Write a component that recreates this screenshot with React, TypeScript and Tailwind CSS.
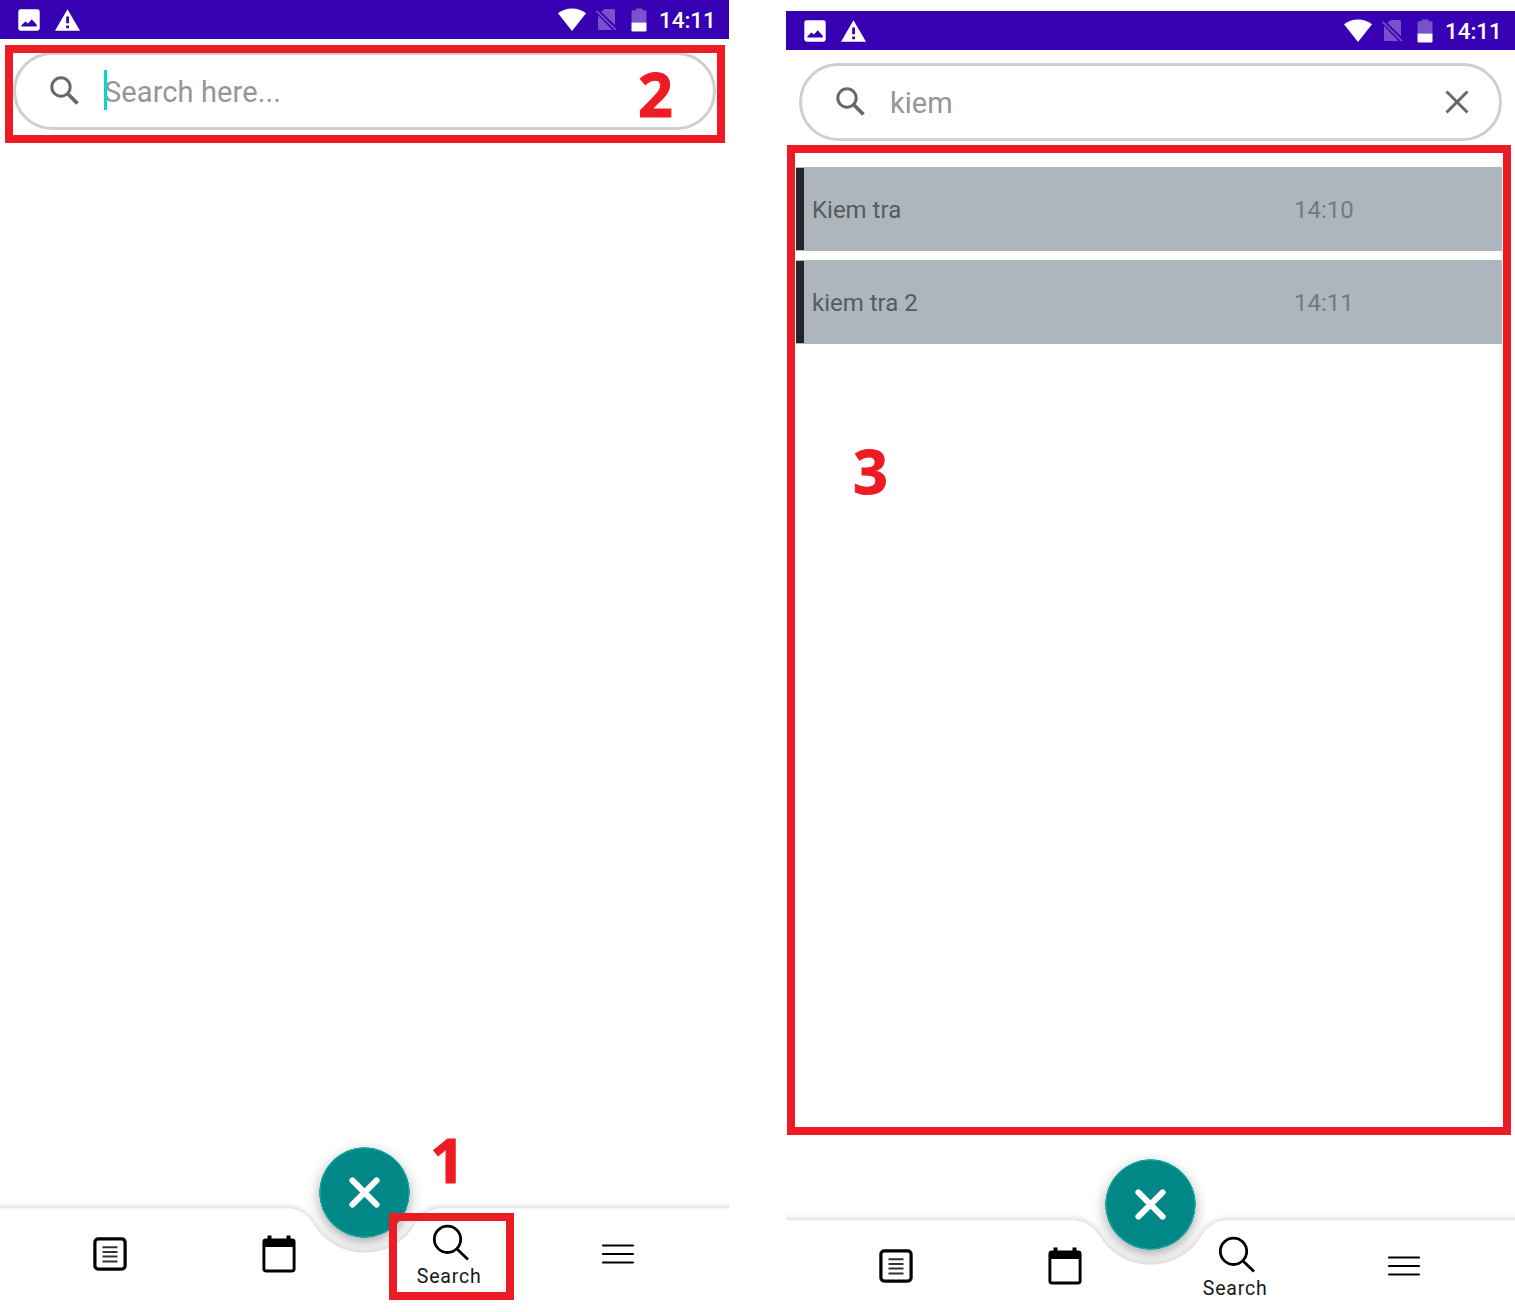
import type { ReactNode } from 'react';

function StatusBar() {
  return (
    <header className="flex h-[39px] shrink-0 items-center justify-between bg-[#3700b3] pr-[14px] pl-[18px] text-white">
      <div className="flex items-center gap-[15px]">
        <svg width="22" height="22" viewBox="0 0 22 22">
          <rect x="0.3" y="0.3" width="21.4" height="21.4" rx="2.4" fill="white" />
          <path d="M3.3 17.5V16.400L7.300 12.400 10 14.600 13.700 10.300 18.700 15.800V17.500z" fill="#3700b3" />
        </svg>
        <svg width="25" height="22" viewBox="0 0 25 22">
          <path d="M12.5 0.3 25 21.8H0z" fill="white" />
          <path d="M11.2 7.5h2.8v6.8h-2.8zM11.2 16.4h2.8v2.8h-2.8z" fill="#3700b3" />
        </svg>
      </div>
      <div className="flex items-center">
        <svg width="28" height="23" viewBox="0 0 28 23" className="mr-[10px]">
          <path d="M14 23 0 5.200C4 2 8.800 0.400 14 0.400S24 2 28 5.200z" fill="white" />
        </svg>
        <svg width="21" height="23" viewBox="0 0 21 23" className="mr-[14px]" opacity="0.32">
          <path d="M8.500 1H17.500Q19 1 19 2.500V17.200L5.500 4zM2 7.200V20.500Q2 22 3.500 22H16.500z" fill="white" />
          <path d="M0.600 2.800 20 22" stroke="white" strokeWidth="1.700" />
        </svg>
        <svg width="16" height="24" viewBox="0 0 16 24" className="mr-[12px]">
          <path d="M0.500 14.500V3.500Q0.500 2.300 1.700 2.300H4.700V0.500H11.500V2.300H14.300Q15.500 2.300 15.500 3.500V14.500z" fill="white" opacity="0.32" />
          <path d="M0.500 14.500H15.500V22.300Q15.500 23.500 14.300 23.500H1.700Q0.500 23.500 0.500 22.300z" fill="white" />
        </svg>
        <span className="w-[56px] pt-px text-[22.500px] leading-none font-medium tracking-[-0.100px] whitespace-nowrap">14:11</span>
      </div>
    </header>
  );
}

function SearchBox({ children }: { children: ReactNode }) {
  return (
    <div className="mt-[13px] mr-[13px] ml-[13px] flex h-[78px] shrink-0 items-center rounded-full border-[3px] border-[#cfcfcf] pr-[30px] pl-[34px] text-[29px] leading-none text-[#969696]">
      <svg width="30" height="30" viewBox="0 0 30 30" fill="none" stroke="#686868" className="mr-[24px] shrink-0">
        <circle cx="11" cy="11" r="9.200" strokeWidth="3" />
        <path d="M18 18 27.500 27.500" strokeWidth="3.800" />
      </svg>
      {children}
    </div>
  );
}

function Note({ title, time }: { title: string; time: string }) {
  return (
    <li className="flex h-[84px] items-center bg-[#adb5bd] text-[24px] leading-none">
      <span className="h-[82px] w-[8px] bg-[#212529]" />
      <span className="ml-[8px] w-[482px] pt-px text-[#575b5f]">{title}</span>
      <span className="pt-px text-[#76797b]">{time}</span>
    </li>
  );
}

const barPath =
  'M-10 0.500H287C303 0.500 311 11 317 21.500A60 60 0 0 0 412 21.500C418 11 426 0.500 442 0.500H740V120H-10z';

function BottomNav() {
  return (
    <nav className="relative mt-auto h-[93px] shrink-0">
      <svg className="absolute -top-[70px] left-0" width="729" height="163" viewBox="0 -70 729 163">
        <path d={barPath} fill="white" className="[filter:drop-shadow(0_-1px_3px_rgba(0,0,0,0.2))]" />
        <circle cx="364.500" cy="-15.500" r="45" fill="#018786" className="[filter:drop-shadow(0_5px_7px_rgba(0,0,0,0.34))]" />
        <path d={barPath} fill="white" />
        <circle cx="364.500" cy="-15.500" r="45" fill="#018786" />
        <circle cx="364.500" cy="-15.500" r="44.500" fill="none" stroke="#03b5a9" strokeWidth="1" />
        <path d="M352.400-27.600 376.600-3.400M376.600-27.600 352.400-3.400" stroke="white" strokeWidth="6" strokeLinecap="round" />
      </svg>
      <div className="relative grid h-full grid-cols-4 pr-[27px] pl-[25px]">
        <div className="flex justify-center pt-[29px]">
          <svg width="34" height="34" viewBox="0 0 34 34" fill="none" stroke="black">
            <rect x="1.900" y="1.900" width="30.200" height="30.200" rx="3.400" strokeWidth="3.200" />
            <path d="M9.500 10.200h15M9.500 14.900h15M9.500 19.500h15M9.500 24.500h15" strokeWidth="2" stroke="#333" />
          </svg>
        </div>
        <div className="flex justify-center pt-[27px]">
          <svg width="34" height="38" viewBox="0 0 34 38">
            <path d="M5.500 0.500h4v4h-4zM24.500 0.500h4v4h-4z" />
            <rect x="1.900" y="5" width="30.200" height="31" rx="2" fill="none" stroke="black" strokeWidth="2.900" />
            <path d="M1.500 5h31v7h-31z" />
          </svg>
        </div>
        <div className="flex flex-col items-center pt-[15px]">
          <svg width="40" height="40" viewBox="0 0 40 40" fill="none" stroke="black" strokeWidth="2.800" className="translate-x-[3px]">
            <circle cx="16.500" cy="16.300" r="13.200" />
            <path d="M26 26 37 36.500" />
          </svg>
          <span className="mt-[4px] ml-[2px] text-[19.500px] leading-[20px] tracking-[0.800px] text-[#171717]">Search</span>
        </div>
        <div className="flex justify-center pt-[35px]">
          <svg width="34" height="22" viewBox="0 0 34 22" stroke="black" strokeWidth="2.200" strokeLinecap="round" className="translate-x-px">
            <path d="M2 2.500H32M2 11H32M2 19.500H32" />
          </svg>
        </div>
      </div>
    </nav>
  );
}

function Marker({ children, className }: { children: string; className: string }) {
  return (
    <span className={`absolute font-["Open_Sans",sans-serif] text-[61px] leading-none font-bold text-[#ed1c24] [-webkit-text-stroke:1px_#ed1c24] ${className}`}>
      {children}
    </span>
  );
}

export default function App() {
  return (
    <main className='flex h-[1312px] w-[1515px] items-start justify-between overflow-hidden bg-white font-["Roboto",sans-serif]'>
      <section className="relative flex h-[1301px] w-[729px] flex-col overflow-hidden">
        <StatusBar />
        <SearchBox>
          <span className="relative pt-[2px] whitespace-nowrap">
            <span className="absolute -top-[6px] left-0 h-[40px] w-[3px] bg-[#03dac5]" />
            <span className="tracking-[0.100px]">Search here...</span>
          </span>
        </SearchBox>
        <BottomNav />
        <div className="absolute top-[45px] left-[5px] h-[98px] w-[720px] border-8 border-[#ed1c24]" />
        <div className="absolute top-[1213px] left-[389px] h-[87px] w-[125px] border-8 border-[#ed1c24]" />
        <Marker className="top-[63px] left-[638px]">2</Marker>
        <Marker className="top-[1129px] left-[430px]">1</Marker>
      </section>
      <section className="relative mt-[11px] flex h-[1301px] w-[729px] flex-col overflow-hidden">
        <StatusBar />
        <SearchBox>
          <span className="pt-[2px]">kiem</span>
          <svg width="24" height="24" viewBox="0 0 24 24" stroke="#686868" strokeWidth="3" className="ml-auto">
            <path d="M1.500 1.500 22.500 22.500M22.500 1.500 1.500 22.500" />
          </svg>
        </SearchBox>
        <ul className="mt-[26px] mr-[13px] ml-[10px] flex flex-col gap-[9px]">
          <Note title="Kiem tra" time="14:10" />
          <Note title="kiem tra 2" time="14:11" />
        </ul>
        <div className="mt-auto -mb-px">
          <BottomNav />
        </div>
        <div className="absolute top-[134px] left-[1px] h-[990px] w-[724px] border-8 border-[#ed1c24]" />
        <Marker className="top-[429px] left-[67px]">3</Marker>
      </section>
    </main>
  );
}
